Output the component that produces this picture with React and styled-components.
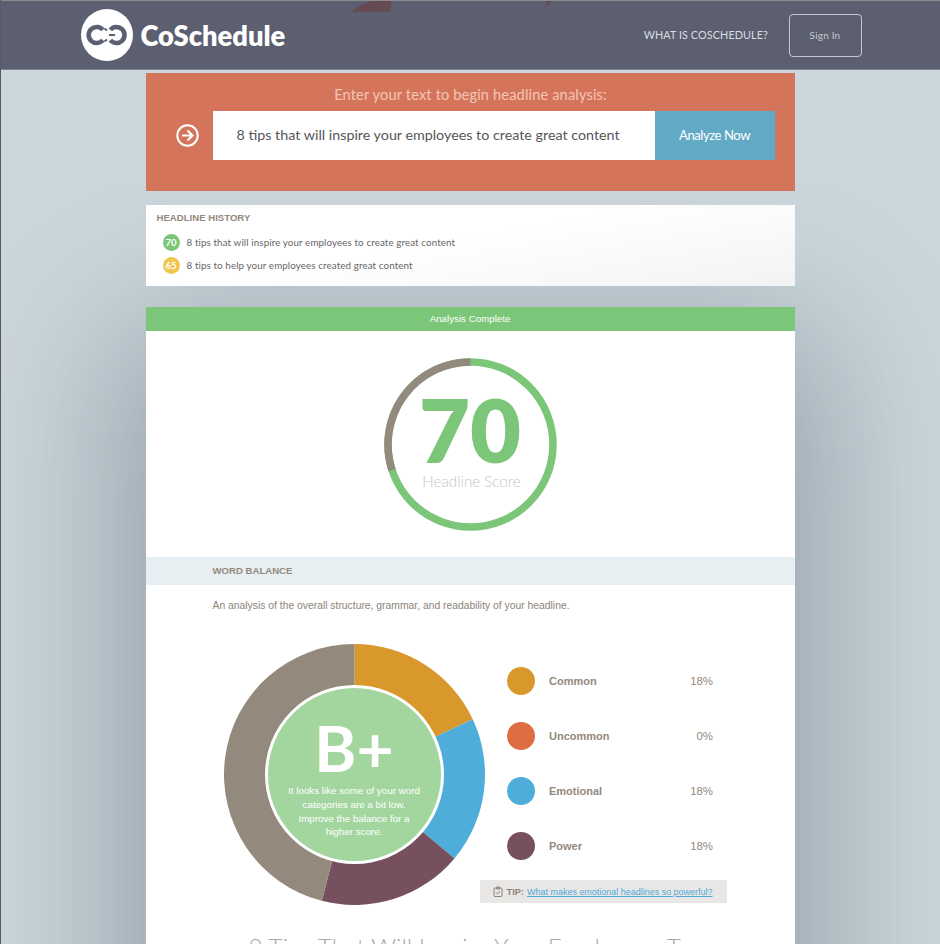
import React from "react";
import styled, { createGlobalStyle } from "styled-components";

const Global = createGlobalStyle`
  html, body { margin: 0; padding: 0; height: 944px; overflow: hidden; background: #ccd7dd; }
  #root { height: 944px; overflow: hidden; }
  * { box-sizing: border-box; }
`;
const humanist = `Lato, "Open Sans", sans-serif`;
const helvetica = `"Liberation Sans", Arial, sans-serif`;

const Page = styled.div`
  height: 944px;
  overflow: hidden;
  border-left: 1.5px solid #5a5a5c;
  background: #ccd7dd;
  display: flex;
  flex-direction: column;
`;
const Header = styled.header`
  position: relative;
  z-index: 2;
  flex: none;
  height: 70px;
  border-top: 1px solid #8b8b8e;
  border-bottom: 1px solid #7d8290;
  background: #5b5f70;
  display: flex;
  align-items: center;
  padding: 0 78.5px 0 79.5px;
`;
const Scenery = styled.svg`
  position: absolute;
  left: 0;
  top: 0;
`;
const Logo = styled.div`
  display: flex;
  align-items: center;
  gap: 8px;
  color: #fff;
  font: 800 27.3px/1 ${humanist};
`;
const Wordmark = styled.span`
  padding-top: 2px;
`;
const Nav = styled.nav`
  margin-left: auto;
  display: flex;
  align-items: center;
  gap: 20.5px;
`;
const NavLink = styled.span`
  color: #dcdde1;
  font: 400 10.8px/1 ${humanist};
  letter-spacing: 0.1px;
`;
const SignIn = styled.span`
  width: 73px;
  height: 43px;
  border: 1px solid #c4c7ce;
  border-radius: 4px;
  color: #c5c8ce;
  font: 400 10px/41px ${humanist};
  text-align: center;
  letter-spacing: 0.2px;
`;
const Column = styled.main`
  width: 649px;
  margin: 3px 0 0 144.5px;
  display: flex;
  flex-direction: column;
`;
const Analyzer = styled.section`
  position: relative;
  z-index: 1;
  height: 118px;
  background: #d4755b;
  padding: 12px 20px 0 0;
`;
const AnalyzerTitle = styled.div`
  color: #f4c5b5;
  font: 400 14.6px/19px ${humanist};
  text-align: center;
  letter-spacing: 0.15px;
  padding-left: 21px;
`;
const AnalyzerRow = styled.div`
  margin-top: 7px;
  display: flex;
  height: 49px;
`;
const ArrowCell = styled.div`
  width: 67px;
  display: flex;
  align-items: center;
  justify-content: center;
  padding-left: 17px;
`;
const HeadlineInput = styled.div`
  flex: 1;
  background: #fff;
  color: #555659;
  font: 400 14.3px/48px ${humanist};
  padding-left: 24px;
`;
const AnalyzeButton = styled.div`
  width: 120px;
  background: #61a9c4;
  color: #fff;
  font: 400 13.2px/48px ${humanist};
  letter-spacing: -0.5px;
  text-align: center;
`;
const History = styled.section`
  position: relative;
  z-index: 1;
  margin-top: 14px;
  height: 81px;
  background: linear-gradient(170deg, #ffffff 45%, #f2f3f4 100%);
  padding: 7px 11px 0;
`;
const SmallHeading = styled.h3`
  margin: 0;
  color: #94897d;
  font: 700 9.6px/12px ${helvetica};
`;
const HistoryRow = styled.div`
  display: flex;
  align-items: center;
  gap: 7px;
  margin: 0 0 6px 6px;
  height: 17px;
  &:first-of-type { margin-top: 9.5px; }
`;
const ScoreBadge = styled.span`
  width: 17px;
  height: 17px;
  border-radius: 50%;
  background: ${(p) => p.$color};
  color: #fff;
  font: 700 9.5px/17px ${humanist};
  text-align: center;
`;
const HistoryText = styled.span`
  color: #666568;
  font: 400 9.75px/12px ${humanist};
  letter-spacing: 0.12px;
`;
const Card = styled.section`
  margin-top: 21px;
  background: #fff;
  box-shadow: 0 50px 150px 30px rgba(60, 70, 84, 0.38);
  height: 800px;
`;
const CompleteBar = styled.div`
  height: 24px;
  background: #7bc678;
  color: #fff;
  font: 400 9.75px/24px ${helvetica};
  text-align: center;
`;
const ScoreSection = styled.div`
  height: 226px;
  padding: 27px 0 0 238px;
`;
const Ring = styled.div`
  position: relative;
  width: 173px;
  height: 173px;
`;
const RingText = styled.div`
  position: absolute;
  inset: 0;
  display: flex;
  flex-direction: column;
  align-items: center;
`;
const ScoreNumber = styled.div`
  margin-top: 36px;
  color: #7bc678;
  font: 800 88px/70px ${humanist};
`;
const ScoreLabel = styled.div`
  margin-top: 8px;
  padding-left: 3px;
  color: #c9c5bf;
  font: 300 15.2px/18px ${humanist};
`;
const Band = styled.div`
  height: 28px;
  background: #e8eff3;
  padding-left: 67px;
  display: flex;
  align-items: center;
`;
const Description = styled.p`
  margin: 14px 0 0 67px;
  color: #8c8379;
  font: 400 10.35px/13px ${helvetica};
`;
const Balance = styled.div`
  margin-top: 32px;
  padding-left: 78px;
  display: flex;
  align-items: flex-start;
`;
const Donut = styled.div`
  position: relative;
  width: 261px;
  height: 261px;
  flex: none;
`;
const DonutCenter = styled.div`
  position: absolute;
  left: 41px;
  top: 41px;
  width: 179px;
  height: 179px;
  border-radius: 50%;
  border: 3px solid #fff;
  background: #a3d69f;
  color: #fff;
  text-align: center;
  display: flex;
  flex-direction: column;
  align-items: center;
`;
const Grade = styled.div`
  margin-top: 27px;
  font: 700 64px/66px ${humanist};
`;
const GradeNote = styled.div`
  margin-top: 3px;
  width: 140px;
  font: 400 9.8px/13.8px ${helvetica};
`;
const Legend = styled.div`
  width: 247px;
  margin-left: -5px;
  padding-top: 23px;
  display: flex;
  flex-direction: column;
`;
const LegendRow = styled.div`
  height: 28px;
  margin: 0 13.5px 27px 27px;
  display: flex;
  align-items: center;
  color: #94897d;
  font: 400 11.4px/14px ${helvetica};
`;
const Swatch = styled.span`
  width: 28px;
  height: 28px;
  border-radius: 50%;
  background: ${(p) => p.$color};
  margin-right: 14.5px;
`;
const LegendName = styled.span`
  font-weight: 700;
  font-size: 11px;
`;
const LegendValue = styled.span`
  margin-left: auto;
`;
const Tip = styled.div`
  margin-top: -7px;
  height: 23px;
  background: #e8e7e5;
  display: flex;
  align-items: center;
  justify-content: center;
  gap: 3px;
  color: #8e857a;
  font: 700 9.3px/12px ${helvetica};
`;
const TipLink = styled.a`
  color: #4fa9d8;
  font-weight: 400;
  font-size: 8.97px;
  text-decoration: underline;
`;
const Suggestion = styled.h2`
  margin: 25px 0 0;
  color: #a9a9a9;
  font: 300 24.4px/34px ${humanist};
  text-align: center;
  white-space: nowrap;
`;

const polar = (cx, cy, r, deg) => {
  const a = ((deg - 90) * Math.PI) / 180;
  return [cx + r * Math.cos(a), cy + r * Math.sin(a)];
};
const wedge = (cx, cy, r, from, to) => {
  const [x1, y1] = polar(cx, cy, r, from);
  const [x2, y2] = polar(cx, cy, r, to);
  return `M${cx} ${cy}L${x1} ${y1}A${r} ${r} 0 ${to - from > 180 ? 1 : 0} 1 ${x2} ${y2}Z`;
};
const arc = (cx, cy, r, from, to) => {
  const [x1, y1] = polar(cx, cy, r, from);
  const [x2, y2] = polar(cx, cy, r, to);
  return `M${x1} ${y1}A${r} ${r} 0 ${to - from > 180 ? 1 : 0} 1 ${x2} ${y2}`;
};

const segments = [
  ["#d9982c", 0, 65],
  ["#4fadda", 65, 130],
  ["#775060", 130, 194.5],
  ["#94897d", 194.5, 360],
];
const legend = [
  ["#d9982c", "Common", "18%"],
  ["#df6d42", "Uncommon", "0%"],
  ["#4fadda", "Emotional", "18%"],
  ["#775060", "Power", "18%"],
];

const LogoMark = () => (
  <svg width="52" height="52" viewBox="0 0 52 52">
    <circle cx="26" cy="26" r="26" fill="#fff" />
    <g fill="none" stroke="#5b5f70" strokeWidth="4.6">
      <path d={arc(15.7, 26, 8, 130, 410)} />
      <path d={arc(35.5, 26, 8, 310, 590)} />
      <path d="M23.5 19.5l2.5 2M23.5 32.5l2.5-2M28 26h6" strokeWidth="2" />
    </g>
  </svg>
);

export default function App() {
  return (
    <>
      <Global />
      <Page>
        <Header>
          <Scenery width="600" height="14" viewBox="0 0 600 14">
            <path d="M351 11 Q358 3 372 0 H390 V6 Q390 11 385 11 Z" fill="#664a53" />
            <path d="M546 0 H550 L544 7 Z" fill="#664a53" />
          </Scenery>
          <Logo>
            <LogoMark />
            <Wordmark>CoSchedule</Wordmark>
          </Logo>
          <Nav>
            <NavLink>WHAT IS COSCHEDULE?</NavLink>
            <SignIn>Sign In</SignIn>
          </Nav>
        </Header>
        <Column>
          <Analyzer>
            <AnalyzerTitle>Enter your text to begin headline analysis:</AnalyzerTitle>
            <AnalyzerRow>
              <ArrowCell>
                <svg width="23" height="23" viewBox="0 0 23 23" fill="none" stroke="#fff" strokeWidth="2">
                  <circle cx="11.5" cy="11.5" r="10.2" />
                  <path d="M6 11.5h10.5M11.5 6.5l5 5-5 5" strokeWidth="2.2" />
                </svg>
              </ArrowCell>
              <HeadlineInput>8 tips that will inspire your employees to create great content</HeadlineInput>
              <AnalyzeButton>Analyze Now</AnalyzeButton>
            </AnalyzerRow>
          </Analyzer>
          <History>
            <SmallHeading>HEADLINE HISTORY</SmallHeading>
            <HistoryRow>
              <ScoreBadge $color="#7bc678">70</ScoreBadge>
              <HistoryText>8 tips that will inspire your employees to create great content</HistoryText>
            </HistoryRow>
            <HistoryRow>
              <ScoreBadge $color="#f0c64e">65</ScoreBadge>
              <HistoryText>8 tips to help your employees created great content</HistoryText>
            </HistoryRow>
          </History>
          <Card>
            <CompleteBar>Analysis Complete</CompleteBar>
            <ScoreSection>
              <Ring>
                <svg width="173" height="173" viewBox="0 0 173 173" fill="none" strokeWidth="7.5">
                  <circle cx="86.5" cy="86.5" r="82.5" stroke="#7bc678" />
                  <path d={arc(86.5, 86.5, 82.5, 252, 360)} stroke="#94897d" />
                </svg>
                <RingText>
                  <ScoreNumber>70</ScoreNumber>
                  <ScoreLabel>Headline Score</ScoreLabel>
                </RingText>
              </Ring>
            </ScoreSection>
            <Band>
              <SmallHeading>WORD BALANCE</SmallHeading>
            </Band>
            <Description>An analysis of the overall structure, grammar, and readability of your headline.</Description>
            <Balance>
              <Donut>
                <svg width="261" height="261" viewBox="0 0 261 261">
                  {segments.map(([c, a, b]) => (
                    <path key={c} d={wedge(130.5, 130.5, 130.5, a, b)} fill={c} />
                  ))}
                </svg>
                <DonutCenter>
                  <Grade>B+</Grade>
                  <GradeNote>
                    It looks like some of your word categories are a bit low. Improve the balance for a higher score.
                  </GradeNote>
                </DonutCenter>
              </Donut>
              <Legend>
                {legend.map(([c, n, v]) => (
                  <LegendRow key={n}>
                    <Swatch $color={c} />
                    <LegendName>{n}</LegendName>
                    <LegendValue>{v}</LegendValue>
                  </LegendRow>
                ))}
                <Tip>
                  <svg width="10" height="11" viewBox="0 0 10 11" fill="none" stroke="#8e857a" strokeWidth="1">
                    <rect x="1" y="2" width="8" height="8.5" rx="1" />
                    <path d="M3.5 1h3v2h-3zM3 6.5l1.5 1.5 2.5-3" />
                  </svg>
                  <span>TIP:</span>
                  <TipLink>What makes emotional headlines so powerful?</TipLink>
                </Tip>
              </Legend>
            </Balance>
            <Suggestion>8 Tips That Will Inspire Your Employees To</Suggestion>
          </Card>
        </Column>
      </Page>
    </>
  );
}
